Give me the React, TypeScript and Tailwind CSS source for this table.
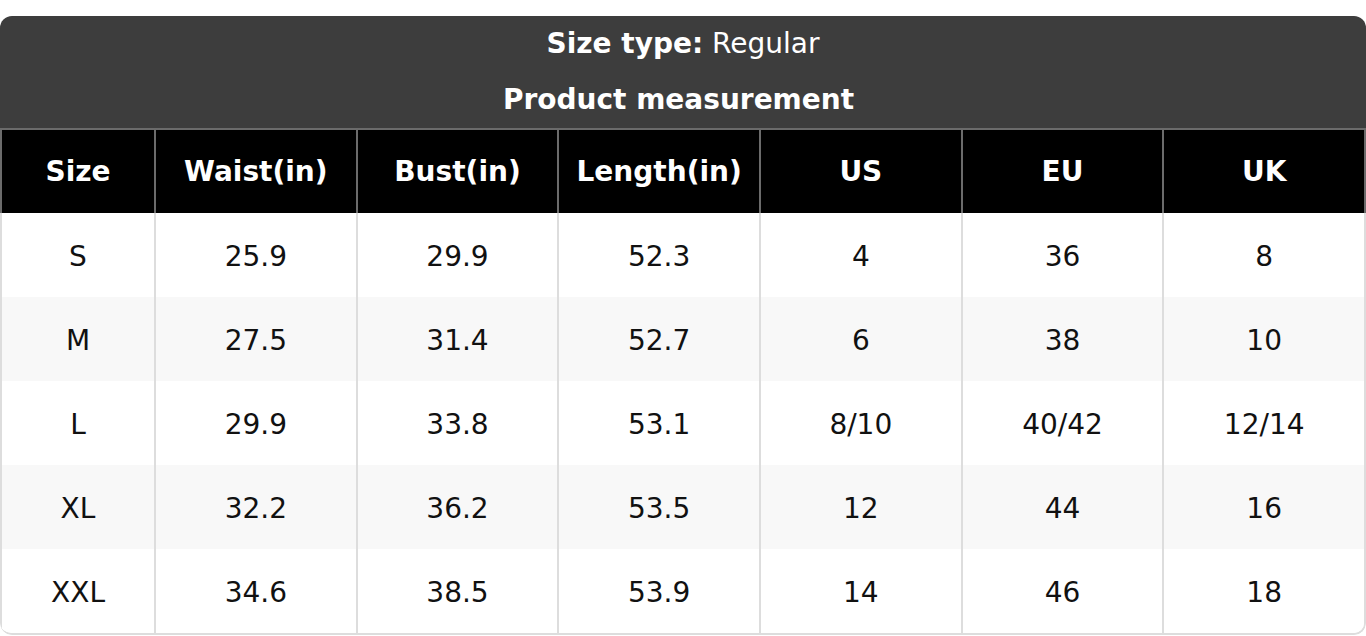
import React from "react";

const headers = ["Size", "Waist(in)", "Bust(in)", "Length(in)", "US", "EU", "UK"];
const rows = [
  ["S", "25.9", "29.9", "52.3", "4", "36", "8"],
  ["M", "27.5", "31.4", "52.7", "6", "38", "10"],
  ["L", "29.9", "33.8", "53.1", "8/10", "40/42", "12/14"],
  ["XL", "32.2", "36.2", "53.5", "12", "44", "16"],
  ["XXL", "34.6", "38.5", "53.9", "14", "46", "18"],
];

export default function App() {
  return (
    <div className="w-[1366px] h-[636px] bg-white pt-4 font-['DejaVu_Sans',sans-serif] text-[28px]">
      <div className="rounded-[12px] overflow-hidden">
        <div className="bg-[#3d3d3d] text-white text-center">
          <div className="h-[56px] leading-[56px]">
            <span className="font-bold">Size type:</span> Regular
          </div>
          <div className="h-[56px] leading-[56px] font-bold pr-[9px]">Product measurement</div>
        </div>
        <div className="grid grid-cols-[154px_repeat(6,1fr)] bg-black text-white font-bold border-t-2 border-r-2 border-[#6b6b6b]">
          {headers.map((h) => (
            <div key={h} className="h-[83px] flex items-center justify-center border-l-2 border-[#6b6b6b]">
              {h}
            </div>
          ))}
        </div>
        <div className="border-r-2 border-b-2 border-[#dddddd] rounded-b-[12px] overflow-hidden">
          {rows.map((r, i) => (
            <div
              key={r[0]}
              className={`grid grid-cols-[154px_repeat(6,1fr)] text-[#111111] ${i % 2 === 1 ? "bg-[#f8f8f8]" : "bg-white"}`}
            >
              {r.map((c, j) => (
                <div key={j} className="h-[84px] pt-[4px] flex items-center justify-center border-l-2 border-[#dddddd]">
                  {c}
                </div>
              ))}
            </div>
          ))}
        </div>
      </div>
    </div>
  );
}
